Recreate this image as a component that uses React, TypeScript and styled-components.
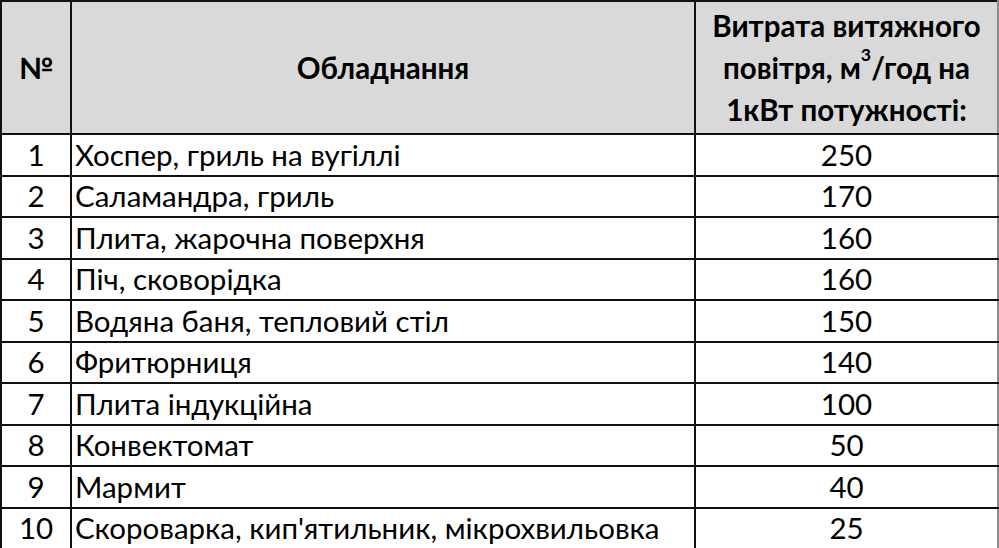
import React from "react";
import styled, { createGlobalStyle } from "styled-components";

const GlobalStyle = createGlobalStyle`
  html, body {
    margin: 0;
    padding: 0;
    background: #ffffff;
  }
  body {
    font-family: "Lato", "Open Sans", "Noto Sans", sans-serif;
    color: #000;
  }
`;

const Table = styled.table`
  width: 999px;
  border-collapse: collapse;
  table-layout: fixed;
  font-size: 29.5px;
`;

const HeadRow = styled.tr`
  height: 133px;
  background: #d9d9d9;
`;

const BodyRow = styled.tr`
  height: 41.5px;
`;

const HeadCell = styled.th<{ $last?: boolean }>`
  border: 2px solid #111;
  border-right-color: ${(p) => (p.$last ? "#8a8a8a" : "#111")};
  font-weight: 700;
  text-align: center;
  vertical-align: middle;
  line-height: 42px;
  padding: 0 4px;
`;

const Cell = styled.td<{ $align?: "left" | "center"; $last?: boolean }>`
  border: 2px solid #111;
  border-right-color: ${(p) => (p.$last ? "#8a8a8a" : "#111")};
  text-align: ${(p) => p.$align || "center"};
  vertical-align: middle;
  padding: 0 3px;
  line-height: 36px;
  white-space: nowrap;
`;

const Sup = styled.sup`
  font-size: 0.6em;
  line-height: 0;
  vertical-align: 1em;
`;

const rows: [string, number][] = [
  ["Хоспер, гриль на вугіллі", 250],
  ["Саламандра, гриль", 170],
  ["Плита, жарочна поверхня", 160],
  ["Піч, сковорідка", 160],
  ["Водяна баня, тепловий стіл", 150],
  ["Фритюрниця", 140],
  ["Плита індукційна", 100],
  ["Конвектомат", 50],
  ["Мармит", 40],
  ["Скороварка, кип'ятильник, мікрохвильовка", 25],
];

export default function App() {
  return (
    <>
      <GlobalStyle />
      <Table>
        <colgroup>
          <col style={{ width: 70 }} />
          <col style={{ width: 624 }} />
          <col />
        </colgroup>
        <thead>
          <HeadRow>
            <HeadCell>№</HeadCell>
            <HeadCell>Обладнання</HeadCell>
            <HeadCell $last>
              Витрата витяжного
              <br />
              повітря, м<Sup>3</Sup>/год на
              <br />
              1кВт потужності:
            </HeadCell>
          </HeadRow>
        </thead>
        <tbody>
          {rows.map(([name, value], i) => (
            <BodyRow key={name}>
              <Cell>{i + 1}</Cell>
              <Cell $align="left">{name}</Cell>
              <Cell $last>{value}</Cell>
            </BodyRow>
          ))}
        </tbody>
      </Table>
    </>
  );
}
